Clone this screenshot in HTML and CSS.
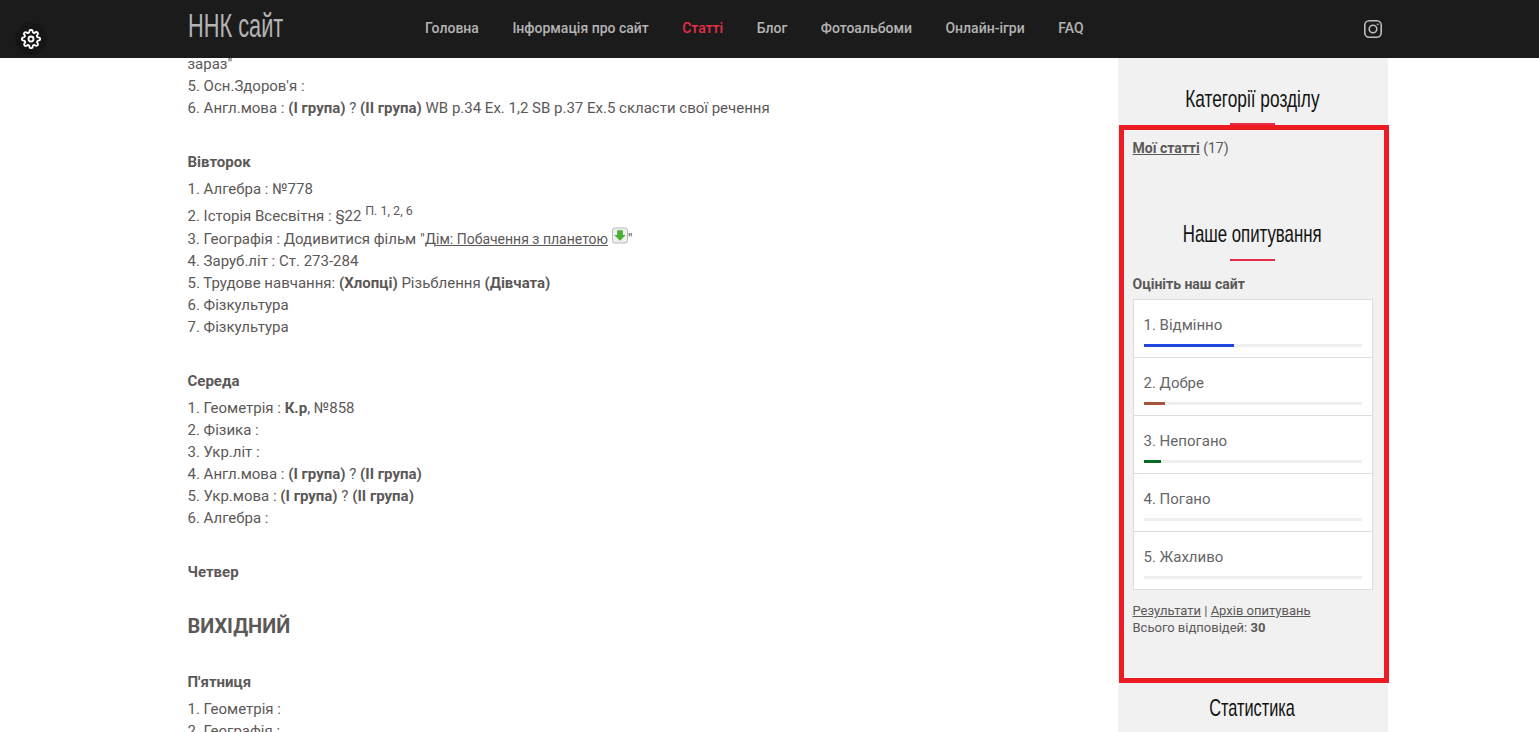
FILE: index.html
```html
<!DOCTYPE html>
<html lang="uk">
<head>
<meta charset="utf-8">
<title>ННК сайт</title>
<link rel="stylesheet" href="styles.css">
</head>
<body>
<header class="topbar">
  <a class="logo"><span>ННК сайт</span></a>
  <nav class="nav">
    <a>Головна</a>
    <a>Інформація про сайт</a>
    <a class="active">Статті</a>
    <a>Блог</a>
    <a>Фотоальбоми</a>
    <a>Онлайн-ігри</a>
    <a>FAQ</a>
  </nav>
  <svg class="insta" viewBox="0 0 18 18" width="18" height="18" fill="none" stroke="currentColor" stroke-width="1.6"><rect x="0.8" y="0.8" width="16.4" height="16.4" rx="4.4"/><circle cx="9" cy="9" r="3.8"/><circle cx="13.7" cy="4.3" r="0.9" fill="currentColor" stroke="none"/></svg>
</header>
<button class="gear" aria-label="settings">
  <svg viewBox="0 0 24 24" width="20" height="20" fill="none" stroke="#fff" stroke-width="2.2" stroke-linecap="round" stroke-linejoin="round"><circle cx="12" cy="12" r="3"/><path d="M19.4 15a1.65 1.65 0 0 0 .33 1.82l.06.06a2 2 0 1 1-2.83 2.83l-.06-.06a1.65 1.65 0 0 0-2.82 1.17V21a2 2 0 0 1-4 0v-.09a1.65 1.65 0 0 0-2.82-1.17l-.06.06a2 2 0 1 1-2.83-2.83l.06-.06A1.65 1.65 0 0 0 3.26 14H3a2 2 0 0 1 0-4h.09a1.65 1.65 0 0 0 1.17-2.82l-.06-.06a2 2 0 1 1 2.83-2.83l.06.06A1.65 1.65 0 0 0 10 3.09V3a2 2 0 0 1 4 0v.09a1.65 1.65 0 0 0 2.82 1.17l.06-.06a2 2 0 1 1 2.83 2.83l-.06.06A1.65 1.65 0 0 0 20.91 10H21a2 2 0 0 1 0 4h-.09a1.65 1.65 0 0 0-1.51 1z"/></svg>
</button>
<main class="page">
  <article class="content">
    <p class="lines">зараз"<br>5. Осн.Здоров'я :<br>6. Англ.мова : <b>(І група)</b> ? <b>(ІІ група)</b> WB p.34 Ex. 1,2 SB p.37 Ex.5 скласти свої речення</p>
    <p class="day day-tue"><b>Вівторок</b></p>
    <p class="lines">1. Алгебра : №778<br>
    2. Історія Всесвітня : §22 <sup>П. 1, 2, 6</sup><br>
    3. Географія : Додивитися фільм "Д<a class="link small-link">ім: Побачення з планетою</a> <svg class="dl" viewBox="0 0 17 17" width="16" height="17"><rect x="0.5" y="0.5" width="16" height="16" rx="2.5" fill="#eeeeee" stroke="#b5b5b5"/><path d="M5.5 3h6v5h3l-6 6-6-6h3z" fill="#4cae35"/></svg>"<br>
    4. Заруб.літ : Ст. 273-284<br>
    5. Трудове навчання: <b>(Хлопці)</b> Різьблення <b>(Дівчата)</b><br>
    6. Фізкультура<br>
    7. Фізкультура</p>
    <p class="day day-wed"><b>Середа</b></p>
    <p class="lines">1. Геометрія : <b>К.р</b>, №858<br>
    2. Фізика :<br>
    3. Укр.літ :<br>
    4. Англ.мова : <b>(І група)</b> ? <b>(ІІ група)</b><br>
    5. Укр.мова : <b>(І група)</b> ? <b>(ІІ група)</b><br>
    6. Алгебра :</p>
    <p class="day day-thu"><b>Четвер</b></p>
    <h2 class="holiday">ВИХІДНИЙ</h2>
    <p class="day day-fri"><b>П'ятниця</b></p>
    <p class="lines">1. Геометрія :<br>2. Географія :</p>
  </article>
  <aside class="sidebar">
    <h3 class="side-title first"><span>Категорії розділу</span></h3>
    <div class="cats"><a class="cat-link">Мої статті</a> (17)</div>
    <h3 class="side-title second"><span>Наше опитування</span></h3>
    <div class="poll-q">Оцініть наш сайт</div>
    <ul class="poll">
      <li><span>1. Відмінно</span><div class="track"><div class="fill" style="width:90px;background:#1f47e0"></div></div></li>
      <li><span>2. Добре</span><div class="track"><div class="fill" style="width:21px;background:#a5573a"></div></div></li>
      <li><span>3. Непогано</span><div class="track"><div class="fill" style="width:17px;background:#056a22"></div></div></li>
      <li><span>4. Погано</span><div class="track"></div></li>
      <li><span>5. Жахливо</span><div class="track"></div></li>
    </ul>
    <div class="poll-foot"><a class="link">Результати</a> | <a class="link">Архів опитувань</a><br>Всього відповідей: <b>30</b></div>
    <h3 class="side-title third"><span>Статистика</span></h3>
  </aside>
  <div class="highlight"></div>
</main>
</body>
</html>
```
FILE: styles.css
```css
* { box-sizing: border-box; }
html, body { margin: 0; height: 732px; overflow: hidden; background: #fff; }
body { font-family: Roboto, sans-serif; font-size: 15px; line-height: 22px; color: #5c5858; }
.topbar { height: 58px; background: #1b1b1b; display: flex; align-items: center; padding-left: 187.5px; position: relative; }
.logo { font-family: "Liberation Sans", sans-serif; font-size: 34px; color: #b4b4b4; width: 237.5px; position: relative; top: -4px; white-space: nowrap; }
.logo span { display: inline-block; transform: scaleX(0.64); transform-origin: left center; }
.nav { display: flex; gap: 33.5px; font-size: 14px; font-weight: 500; color: #b4b4b4; margin-bottom: 2px; }
.nav .active { color: #e62e49; }
.insta { color: #bdbdbd; position: absolute; left: 1364px; top: 20px; }
.gear { position: absolute; left: 15px; top: 23px; width: 32px; height: 32px; border-radius: 50%; border: 0; background: #161616; padding: 0; display: flex; align-items: center; justify-content: center; z-index: 3; }
.page { display: flex; padding-left: 187.5px; height: 674px; overflow: hidden; position: relative; }
.content { width: 930px; margin-top: -5px; }
.content p { margin: 0; }
.content b { font-weight: 700; }
.day { line-height: 22px; }
.day-tue { padding-top: 32px; padding-bottom: 5px; }
.day-wed { padding-top: 32px; padding-bottom: 5px; }
.day-thu { padding-top: 32px; }
.holiday { margin: 30px 0 0; font-size: 20px; line-height: 26px; font-weight: 700; }
.day-fri { padding-top: 32px; padding-bottom: 5px; }
sup { font-size: 12.5px; line-height: 22px; vertical-align: 6px; }
.link, .cat-link { text-decoration: underline; }
.small-link { font-size: 14px; }
.dl { vertical-align: -1px; margin-bottom: 1px; }
.sidebar { width: 270px; background: #f1f1f1; padding: 0 15px; }
.side-title { margin: 0; font-family: "Liberation Sans", sans-serif; font-size: 24px; font-weight: 400; color: #111; text-align: center; line-height: 30px; position: relative; white-space: nowrap; }
.side-title span { display: inline-block; }
.first span { transform: scaleX(0.72); }
.second span { transform: scaleX(0.70); }
.third span { transform: scaleX(0.68); }
.side-title.first { padding-top: 26px; height: 67px; }
.side-title.first::after, .side-title.second::after { content: ""; position: absolute; left: 97px; width: 45px; height: 2px; background: #e62e49; }
.side-title.first::after { bottom: 0; }
.side-title.second { margin-top: 60px; height: 41px; }
.side-title.second::after { top: 40px; }
.cats { margin-top: 12px; height: 22px; font-size: 14px; }
.cat-link { font-weight: 700; }
.poll-q { margin-top: 13px; font-weight: 700; font-size: 14px; }
.poll { list-style: none; margin: 4px 0 0; padding: 0; background: #fff; border: 1px solid #ddd; }
.poll li { height: 58px; padding: 14px 10px 0; border-top: 1px solid #ddd; color: #666; }
.poll li:first-child { border-top: 0; height: 57px; padding-top: 14px; }
.poll span { display: block; height: 22px; }
.track { height: 3px; background: #eee; margin-top: 8px; }
.fill { height: 3px; }
.poll-foot { margin-top: 12px; font-size: 13px; line-height: 17px; }
.side-title.third { margin-top: 57px; }
.highlight { position: absolute; left: 1119px; top: 67px; width: 270px; height: 558px; border: 5px solid #ed1c24; pointer-events: none; }
```
